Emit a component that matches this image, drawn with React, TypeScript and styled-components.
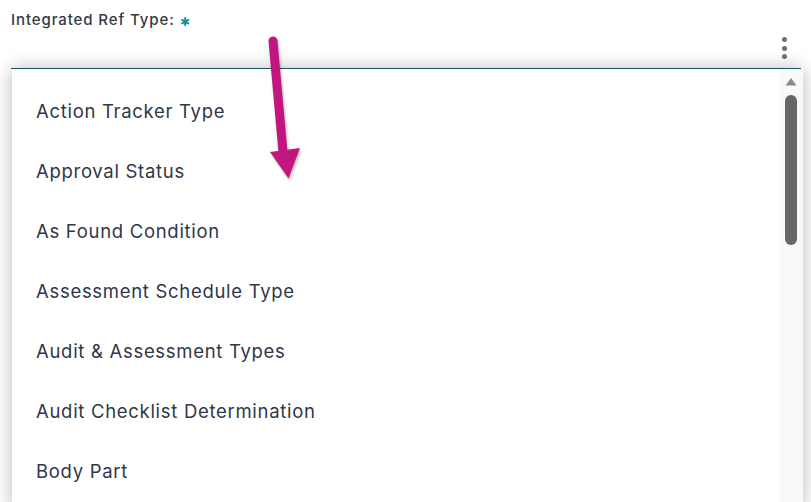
import React from "react";
import styled, { createGlobalStyle } from "styled-components";

const GlobalStyle = createGlobalStyle`
  html, body {
    margin: 0;
    padding: 0;
    background: #ffffff;
    overflow: hidden;
  }
  body {
    font-family: Inter, "Noto Sans", sans-serif;
  }
`;

const items = [
  "Action Tracker Type",
  "Approval Status",
  "As Found Condition",
  "Assessment Schedule Type",
  "Audit & Assessment Types",
  "Audit Checklist Determination",
  "Body Part",
];

const Page = styled.div`
  position: relative;
  width: 811px;
  height: 502px;
  overflow: hidden;
`;

const Field = styled.div`
  padding: 10px 10px 0 11px;
`;

const Label = styled.div`
  font-size: 15px;
  font-weight: 500;
  color: #333a44;
  letter-spacing: 0.9px;
  line-height: 20px;
  display: flex;
  align-items: center;
  gap: 5px;
`;

const Required = styled.span`
  color: #1a8aa0;
  font-size: 12px;
  line-height: 1;
  margin-top: 3px;
`;

const InputRow = styled.div`
  position: relative;
  z-index: 2;
  height: 38px;
  border-bottom: 1.5px solid #1b5960;
  display: flex;
  justify-content: flex-end;
  align-items: center;
  padding-right: 14px;
`;

const Kebab = styled.div`
  display: flex;
  flex-direction: column;
  gap: 3.5px;
  margin-top: -2px;
`;

const Dot = styled.span`
  width: 5px;
  height: 5px;
  border-radius: 50%;
  background: #6e6e73;
`;

const Menu = styled.div`
  position: relative;
  z-index: 1;
  margin-left: 12px;
  width: 791px;
  height: 440px;
  background: #ffffff;
  box-shadow: 0 0 18px rgba(0, 0, 0, 0.28);
  display: flex;
`;

const List = styled.ul`
  flex: 1;
  list-style: none;
  margin: 0;
  padding: 12px 0 0 24px;
`;

const Item = styled.li`
  height: 60px;
  display: flex;
  align-items: center;
  font-size: 18.5px;
  color: #2f3848;
  letter-spacing: 0.7px;
`;

const ScrollTrack = styled.div`
  width: 23px;
  background: #f9f9f9;
  display: flex;
  flex-direction: column;
  align-items: center;
  padding-top: 8px;
  padding-right: 1px;
  box-sizing: border-box;
`;

const ScrollThumb = styled.div`
  width: 12px;
  height: 150px;
  border-radius: 6px;
  background: #666666;
  margin-top: 9px;
`;

const Annotation = styled.svg`
  position: absolute;
  left: 0;
  top: 0;
  pointer-events: none;
  z-index: 5;
`;

export default function App() {
  return (
    <Page>
      <GlobalStyle />
      <Field>
        <Label>
          Integrated Ref Type:
          <Required>✱</Required>
        </Label>
        <InputRow>
          <Kebab>
            <Dot />
            <Dot />
            <Dot />
          </Kebab>
        </InputRow>
      </Field>
      <Menu>
        <List>
          {items.map((t) => (
            <Item key={t}>{t}</Item>
          ))}
        </List>
        <ScrollTrack>
          <svg width="12" height="9" viewBox="0 0 12 9">
            <path d="M6 1 L11.5 8.5 L0.5 8.5 Z" fill="#8a8a8a" />
          </svg>
          <ScrollThumb />
        </ScrollTrack>
      </Menu>
      <Annotation width="811" height="502" viewBox="0 0 811 502">
        <defs>
          <filter id="sh" x="-50%" y="-50%" width="200%" height="200%">
            <feDropShadow dx="1" dy="2" stdDeviation="1.5" floodColor="#000" floodOpacity="0.3" />
          </filter>
        </defs>
        <g filter="url(#sh)" fill="#c1197f" stroke="none">
          <line x1="273" y1="41" x2="283" y2="152" stroke="#c1197f" strokeWidth="9" strokeLinecap="round" />
          <path d="M270 152 L300 148 L288.5 178.5 Z" />
        </g>
      </Annotation>
    </Page>
  );
}
